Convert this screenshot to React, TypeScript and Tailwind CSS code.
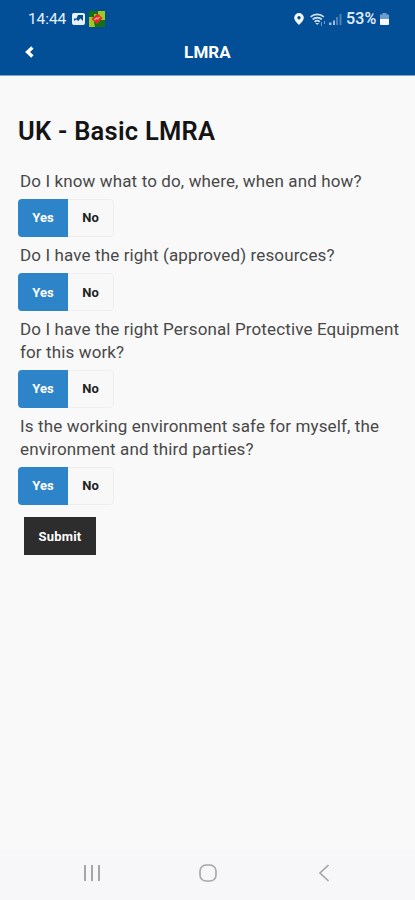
import { useState } from "react";

type Answer = "yes" | "no";

interface Question {
  id: string;
  lines: string[];
}

const QUESTIONS: Question[] = [
  { id: "plan", lines: ["Do I know what to do, where, when and how?"] },
  { id: "resources", lines: ["Do I have the right (approved) resources?"] },
  {
    id: "ppe",
    lines: ["Do I have the right Personal Protective Equipment", "for this work?"],
  },
  {
    id: "environment",
    lines: [
      "Is the working environment safe for myself, the",
      "environment and third parties?",
    ],
  },
];

export default function App() {
  const [answers, setAnswers] = useState<Record<string, Answer>>({
    plan: "yes",
    resources: "yes",
    ppe: "yes",
    environment: "yes",
  });

  return (
    <div className="flex h-[900px] w-[415px] flex-col overflow-hidden bg-[#f9f9f9] font-['Roboto',sans-serif]">
      <header className="h-[76px] shrink-0 border-b border-[#7fa3cc] bg-[#024f98] text-white">
        <StatusBar />
        <div className="grid h-[28px] grid-cols-3 items-center">
          <button type="button" aria-label="Back" className="ml-[24px] w-[11px]">
            <svg width="11" height="12" viewBox="0 0 11 12" fill="none">
              <path d="M8.4 1.6 3.6 6l4.8 4.4" stroke="currentColor" strokeWidth="3.4" />
            </svg>
          </button>
          <h1 className="text-center text-[17px] leading-[28px] font-bold tracking-[0.1px]">
            LMRA
          </h1>
        </div>
      </header>

      <main className="flex-1 px-[18px] pt-[39px]">
        <h2 className="text-[25.5px] leading-[32px] font-semibold tracking-[0.25px] text-[#141414]">
          UK - Basic LMRA
        </h2>

        <form className="mt-[22.7px]" onSubmit={(e) => e.preventDefault()}>
          {QUESTIONS.map((question) => (
            <fieldset key={question.id} className="mb-[6.9px]">
              <legend className="pl-[2px] text-[17px] leading-[22.5px] tracking-[0.125px] whitespace-nowrap text-[#484848]">
                {question.lines.map((line) => (
                  <span key={line} className="block">
                    {line}
                  </span>
                ))}
              </legend>
              <YesNoToggle
                value={answers[question.id]}
                onChange={(value) =>
                  setAnswers((prev) => ({ ...prev, [question.id]: value }))
                }
              />
            </fieldset>
          ))}

          <button
            type="submit"
            className="mt-[5.5px] ml-[6px] h-[38px] w-[72px] bg-[#2d2d2d] text-[13px] font-bold tracking-[0.2px] text-white"
          >
            Submit
          </button>
        </form>
      </main>

      <NavigationBar />
    </div>
  );
}

interface YesNoToggleProps {
  value: Answer;
  onChange: (value: Answer) => void;
}

function YesNoToggle({ value, onChange }: YesNoToggleProps) {
  return (
    <div className="mt-[6.9px] flex h-[38px] w-[96px] overflow-hidden rounded-[4px] text-[13px] font-bold">
      <button
        type="button"
        onClick={() => onChange("yes")}
        className={
          value === "yes"
            ? "w-[50px] bg-[#2e84c8] text-white"
            : "w-[50px] border border-[#eeeeee] bg-[#f8f8f8] text-[#222222]"
        }
      >
        Yes
      </button>
      <button
        type="button"
        onClick={() => onChange("no")}
        className={
          value === "no"
            ? "w-[46px] bg-[#2e84c8] text-white"
            : "w-[46px] rounded-r-[4px] border border-l-0 border-[#eeeeee] bg-[#f8f8f8] text-[#222222]"
        }
      >
        No
      </button>
    </div>
  );
}

function StatusBar() {
  return (
    <div className="flex h-[38px] items-center justify-between pr-[26px] pl-[28px] text-[#e8f0fa]">
      <div className="flex items-center">
        <span className="w-[44px] text-[15.5px] leading-[20px] tracking-[-0.1px]">14:44</span>
        <svg width="13" height="12" viewBox="0 0 13 12">
          <rect width="13" height="12" rx="2" fill="#e8f0fa" />
          <path d="M2 5.5h2.5L6 2h5v6L8.5 5.5 6.2 8 4.3 6.5 2 8z" fill="#024f98" />
        </svg>
        <svg width="16" height="16" viewBox="0 0 16 16" className="ml-[4px]">
          <path d="M0 0h16v16H0z" fill="#167016" />
          <path d="M5 0h11v10H5zM0 6h5v5l1 5H0z" fill="#9fc823" />
          <path d="M5 0h4v3H5zM11 9h5v7h-5z" fill="#167016" />
          <path d="M8.5 2.5 13.5 7 8 13 2.5 8z" fill="#e22b24" />
          <path d="m5.5 9 2-2 1 1 2-2" fill="none" stroke="#f6b4a8" strokeWidth="1.2" />
        </svg>
      </div>
      <div className="flex items-center">
        <svg width="10" height="12" viewBox="0 0 10 12">
          <path
            d="M5 0a4.8 4.8 0 0 0-4.8 4.8C.2 8 5 12 5 12s4.8-4 4.8-7.2A4.8 4.8 0 0 0 5 0zm0 3a1.7 1.7 0 1 1 0 3.4A1.7 1.7 0 0 1 5 3z"
            fill="#f5f9ff"
          />
        </svg>
        <svg width="17" height="13" viewBox="0 0 17 13" className="ml-[6px]" fill="none">
          <g stroke="#d6e3f2" strokeWidth="1.7">
            <path d="M.6 3.9a10 10 0 0 1 13.2 0" />
            <path d="M2.6 6.4a6.8 6.8 0 0 1 9.2 0" />
            <path d="M4.6 8.8a3.8 3.8 0 0 1 5.2 0" />
          </g>
          <path d="m7.2 12-1.8-2H9z" fill="#d6e3f2" />
          <path d="M11.5 9v4M14.5 11V8" stroke="#6f9cca" />
        </svg>
        <svg width="13" height="12" viewBox="0 0 13 12" className="ml-[2px]">
          <path d="M0 9.5h2.5V12H0zM4 7.5h2V12H4z" fill="#9dbbdc" />
          <path d="M7 4h2v8H7zM10.5 1h2v11h-2z" fill="#4d82b8" />
        </svg>
        <span className="ml-[4px] w-[32px] text-[16px] leading-[20px] font-medium tracking-[0.1px]">
          53%
        </span>
        <svg width="9" height="12" viewBox="0 0 9 12" className="ml-[2px]">
          <path d="M2.5 0h4v1.5H9V6H0V1.5h2.5z" fill="#6f9cca" />
          <path d="M0 6h9v5a1 1 0 0 1-1 1H1a1 1 0 0 1-1-1z" fill="#f5f9ff" />
        </svg>
      </div>
    </div>
  );
}

function NavigationBar() {
  return (
    <nav className="flex h-[51px] shrink-0 items-center bg-[#f7f7f9] pb-[3px] pl-[83px] text-[#a6a6a9]">
      <button type="button" aria-label="Recent apps">
        <svg width="18" height="18" viewBox="0 0 18 18" fill="none" stroke="currentColor" strokeWidth="2">
          <path d="M2 1v16M9 1v16M16 1v16" />
        </svg>
      </button>
      <button type="button" aria-label="Home" className="ml-[98px]">
        <svg width="18" height="18" viewBox="0 0 18 18" fill="none" stroke="currentColor" strokeWidth="1.6">
          <rect x="1" y="1" width="16" height="16" rx="6" />
        </svg>
      </button>
      <button type="button" aria-label="Back to previous screen" className="ml-[101px]">
        <svg width="12" height="18" viewBox="0 0 12 18" fill="none" stroke="currentColor" strokeWidth="1.7">
          <path d="M10.5 1 2 9l8.5 8" />
        </svg>
      </button>
    </nav>
  );
}
